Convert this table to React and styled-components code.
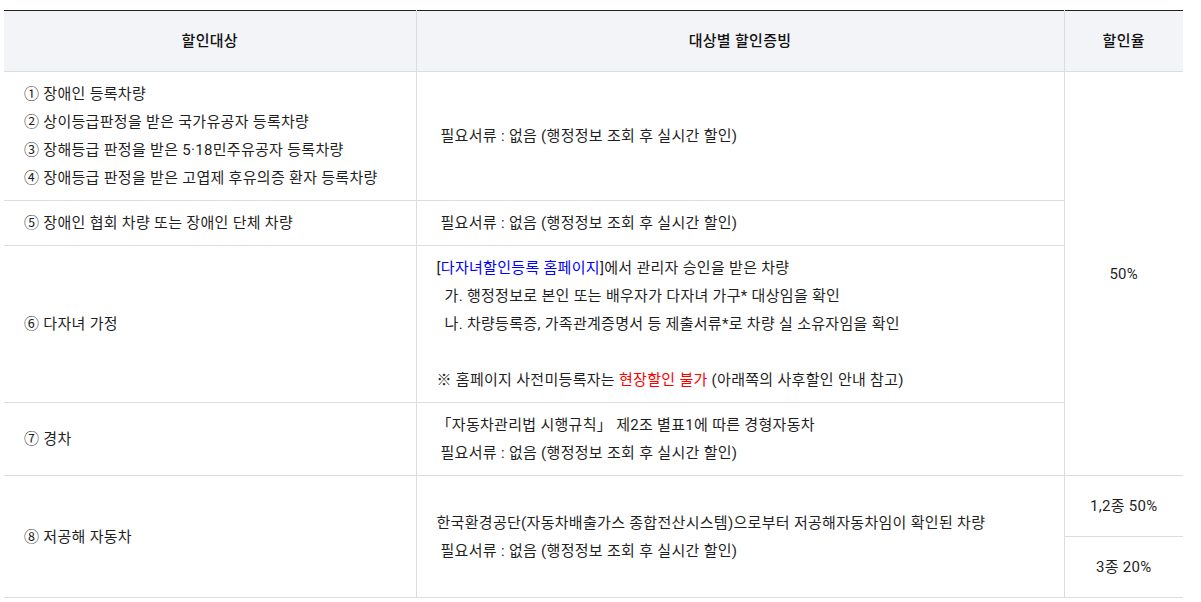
import styled, { createGlobalStyle } from "styled-components";

const GlobalStyle = createGlobalStyle`
  body {
    margin: 0;
    background: #fff;
    font-family: "Roboto", "Noto Sans CJK KR", sans-serif;
  }
`;

const Wrap = styled.div`
  padding: 10px 18px 0 4px;
`;

const Table = styled.table`
  width: 1179px;
  border-collapse: collapse;
  table-layout: fixed;
  border-top: 1px solid #222;
  font-size: 15px;
  line-height: 28px;
  letter-spacing: 0.3px;
  color: #1f1f1f;
`;

const Th = styled.th`
  height: 60px;
  padding: 0;
  background: #f3f4f8;
  border: 1px solid #dcdde1;
  border-top: 1px solid #222;
  font-weight: 500;
  color: #111;
  text-align: center;
  &:first-child { border-left: none; }
  &:last-child { border-right: none; }
`;

const Td = styled.td`
  padding: 8px 20px;
  border: 1px solid #dcdde1;
  vertical-align: middle;
  text-align: ${(p) => (p.$center ? "center" : "left")};
  height: ${(p) => (p.$h ? `${p.$h}px` : "auto")};
  ${(p) => p.$first && "border-left: none;"}
  ${(p) => p.$last && "border-right: none;"}
`;

const Line = styled.div`
  white-space: pre;
  min-height: 28px;
`;

const Blue = styled.span`
  color: #0000ff;
`;

const Red = styled.span`
  color: #ff0000;
`;

const none = " 필요서류 : 없음 (행정정보 조회 후 실시간 할인)";

export default function App() {
  return (
    <Wrap>
      <GlobalStyle />
      <Table>
        <colgroup>
          <col style={{ width: 412 }} />
          <col style={{ width: 648 }} />
          <col style={{ width: 119 }} />
        </colgroup>
        <thead>
          <tr>
            <Th>할인대상</Th>
            <Th>대상별 할인증빙</Th>
            <Th>할인율</Th>
          </tr>
        </thead>
        <tbody>
          <tr>
            <Td $first>
              <Line>① 장애인 등록차량</Line>
              <Line>② 상이등급판정을 받은 국가유공자 등록차량</Line>
              <Line>③ 장해등급 판정을 받은 5·18민주유공자 등록차량</Line>
              <Line>④ 장애등급 판정을 받은 고엽제 후유의증 환자 등록차량</Line>
            </Td>
            <Td>
              <Line>{none}</Line>
            </Td>
            <Td $center $last rowSpan={4}>
              50%
            </Td>
          </tr>
          <tr>
            <Td $first>
              <Line>⑤ 장애인 협회 차량 또는 장애인 단체 차량</Line>
            </Td>
            <Td>
              <Line>{none}</Line>
            </Td>
          </tr>
          <tr>
            <Td $first>
              <Line>⑥ 다자녀 가정</Line>
            </Td>
            <Td>
              <Line>
                [<Blue>다자녀할인등록 홈페이지</Blue>]에서 관리자 승인을 받은 차량
              </Line>
              <Line>{"  가. 행정정보로 본인 또는 배우자가 다자녀 가구* 대상임을 확인"}</Line>
              <Line>{"  나. 차량등록증, 가족관계증명서 등 제출서류*로 차량 실 소유자임을 확인"}</Line>
              <Line> </Line>
              <Line>
                ※ 홈페이지 사전미등록자는 <Red>현장할인 불가</Red> (아래쪽의 사후할인 안내 참고)
              </Line>
            </Td>
          </tr>
          <tr>
            <Td $first>
              <Line>⑦ 경차</Line>
            </Td>
            <Td>
              <Line>「자동차관리법 시행규칙」 제2조 별표1에 따른 경형자동차</Line>
              <Line>{none}</Line>
            </Td>
          </tr>
          <tr>
            <Td $first rowSpan={2}>
              <Line>⑧ 저공해 자동차</Line>
            </Td>
            <Td rowSpan={2}>
              <Line>한국환경공단(자동차배출가스 종합전산시스템)으로부터 저공해자동차임이 확인된 차량</Line>
              <Line>{none}</Line>
            </Td>
            <Td $center $last $h={44}>
              1,2종 50%
            </Td>
          </tr>
          <tr>
            <Td $center $last $h={44}>
              3종 20%
            </Td>
          </tr>
        </tbody>
      </Table>
    </Wrap>
  );
}
